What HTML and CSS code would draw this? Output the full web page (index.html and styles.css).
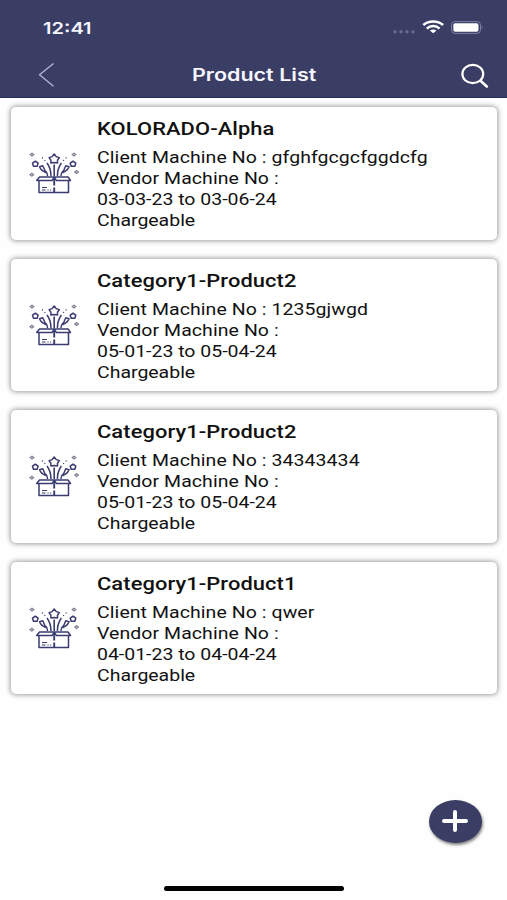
FILE: index.html
```html
<!DOCTYPE html>
<html lang="en">
<head>
    <meta charset="UTF-8">
    <meta name="viewport" content="width=device-width, initial-scale=1.0">
    <title>Product List</title>
    <link rel="stylesheet" href="styles.css">
</head>
<body>
    <svg class="symbols" width="0" height="0">
        <symbol id="box" viewBox="0 0 52 44">
            <g fill="none" stroke="#3a3b70" stroke-width="1.5" stroke-linejoin="round">
                <!-- box -->
                <path d="M11 30V41.5H40.500V30"/>
                <path d="M11.500 26H40L42.500 29.500H28.500L26.200 26.500L24 29.500H8.700Z"/>
                <path d="M26.200 26V34.500M26.200 36.500V41.500" stroke-width="1.9"/>
                <path d="M14 36.500H19M14 39H17.500M19.500 39H20.700M22 39H23.200" stroke-width="1.1"/>
                <!-- streamers -->
                <path d="M26.200 13.500V25" stroke-width="1.6"/>
                <path d="M23 25C23 20 22 16 19 12M29.400 25C29.400 20 30.400 16 33.400 12"/>
                <path d="M19.500 25C19.500 23 19 21.500 17.500 20M33 25C33 23 33.500 21.500 35 20"/>
                <path d="M11.600 15.800L14.800 14.800L17.800 21.500C15 20.500 12.500 18.500 11.600 15.800Z"/>
                <path d="M41 15.800L37.800 14.800L34.800 21.500C37.600 20.500 40.100 18.500 41 15.800Z"/>
                <path d="M14 6.500L14.800 7.300M16.500 9L17.300 9.900M38.500 6.500L37.700 7.300M36 9L35.200 9.900" stroke-width="1.1"/>
                <!-- stars -->
                <path d="M26.200 3L28.300 5.600L31.300 6.600L29.500 9.200V12L26.200 11.500L22.900 12V9.200L21.100 6.600L24.100 5.600Z"/>
                <path d="M7.300 10.200L10.100 12.200L9.100 15.300H5.500L4.500 12.200Z"/>
                <path d="M45 10.200L47.800 12.200L46.800 15.300H43.200L42.200 12.200Z"/>
            </g>
            <g fill="none" stroke="#7b7d90" stroke-width="1.2">
                <path d="M4 2.200L5.800 3.600L4 5L2.200 3.600Z"/>
                <path d="M46 2.200L47.800 3.600L46 5L44.200 3.600Z"/>
                <path d="M3.800 22.300L5.600 23.700L3.800 25.100L2 23.700Z"/>
                <path d="M48.600 19.700L50.400 21.100L48.600 22.500L46.800 21.100Z"/>
            </g>
        </symbol>
    </svg>

    <header class="header">
        <div class="status-bar">
            <span class="time"><span class="wide">12:41</span></span>
            <svg class="status-icons" width="92" height="16" viewBox="0 0 92 16">
                <g fill="#686b92">
                    <circle cx="4" cy="11.7" r="1.7"/>
                    <circle cx="10" cy="11.7" r="1.7"/>
                    <circle cx="16" cy="11.7" r="1.7"/>
                    <circle cx="22" cy="11.7" r="1.7"/>
                </g>
                <g fill="none" stroke="#fff" stroke-width="2.5">
                    <path d="M32.3 5C37.7 0.3 46.7 0.3 52.1 5"/>
                    <path d="M35.8 8.6C39.5 5.2 44.9 5.2 48.6 8.6"/>
                </g>
                <path fill="#fff" d="M38.9 10.6Q42.2 8.2 45.5 10.6L42.2 13.2Z"/>
                <rect x="60.5" y="1.6" width="29" height="11.8" rx="3.5" fill="none" stroke="#7d80a6"/>
                <rect x="62.3" y="3.3" width="25.2" height="8.5" rx="2" fill="#fff"/>
                <path d="M90.8 5.8Q92.4 7.5 90.8 9.2Z" fill="#8d90b2"/>
            </svg>
        </div>
        <div class="nav-bar">
            <svg class="back" width="16" height="26" viewBox="0 0 16 26">
                <path d="M15.5 1.5L1.5 12.8L15.5 24.2" fill="none" stroke="#b9bbdf" stroke-width="1.2"/>
            </svg>
            <h1 class="nav-title"><span class="wide">Product List</span></h1>
            <svg class="search" width="30" height="26" viewBox="0 0 30 26">
                <ellipse cx="12.8" cy="12" rx="10.4" ry="9.2" fill="none" stroke="#fff" stroke-width="2.2"/>
                <path d="M20.5 18.8L26.8 24.5" stroke="#fff" stroke-width="2.6" stroke-linecap="round"/>
            </svg>
        </div>
    </header>

    <main class="list">
        <div class="card">
            <svg class="card-icon"><use href="#box"/></svg>
            <div class="card-text wide">
                <h2>KOLORADO-Alpha</h2>
                <p class="machine">Client Machine No : gfghfgcgcfggdcfg</p>
                <p class="machine">Vendor Machine No :</p>
                <p>03-03-23 to 03-06-24</p>
                <p>Chargeable</p>
            </div>
        </div>
        <div class="card">
            <svg class="card-icon"><use href="#box"/></svg>
            <div class="card-text wide">
                <h2>Category1-Product2</h2>
                <p class="machine">Client Machine No : 1235gjwgd</p>
                <p class="machine">Vendor Machine No :</p>
                <p>05-01-23 to 05-04-24</p>
                <p>Chargeable</p>
            </div>
        </div>
        <div class="card">
            <svg class="card-icon"><use href="#box"/></svg>
            <div class="card-text wide">
                <h2>Category1-Product2</h2>
                <p class="machine">Client Machine No : 34343434</p>
                <p class="machine">Vendor Machine No :</p>
                <p>05-01-23 to 05-04-24</p>
                <p>Chargeable</p>
            </div>
        </div>
        <div class="card">
            <svg class="card-icon"><use href="#box"/></svg>
            <div class="card-text wide">
                <h2>Category1-Product1</h2>
                <p class="machine">Client Machine No : qwer</p>
                <p class="machine">Vendor Machine No :</p>
                <p>04-01-23 to 04-04-24</p>
                <p>Chargeable</p>
            </div>
        </div>
    </main>

    <button class="add-button" aria-label="Add product">
        <svg width="28" height="24" viewBox="0 0 28 24">
            <path d="M3 12H25M14 3V21" stroke="#fff" stroke-width="4" stroke-linecap="round"/>
        </svg>
    </button>
    <div class="home-indicator"></div>
</body>
</html>
```

FILE: styles.css
```css
* {
    box-sizing: border-box;
}
body {
    margin: 0;
    height: 900px;
    font-family: Roboto, sans-serif;
    background-color: #fefefe;
    color: #111;
    overflow: hidden;
    position: relative;
}
h1, h2, p {
    margin: 0;
}
.symbols {
    display: block;
}
/* stretched lettering */
.wide {
    display: inline-block;
    transform: scaleX(1.216);
    transform-origin: left center;
    white-space: nowrap;
}
.header {
    height: 98px;
    background-color: #3a3d64;
    border-bottom: 1px solid #2c2c5c;
    color: #fff;
}
.status-bar {
    display: flex;
    justify-content: space-between;
    height: 54px;
    padding: 20px 24px 0 43px;
}
.time {
    font-family: Inter, sans-serif;
    font-size: 16.5px;
    font-weight: 600;
    line-height: 16px;
    color: #f4f4ff;
}
.nav-bar {
    display: grid;
    grid-template-columns: 90px 1fr 110px;
    align-items: center;
    height: 42px;
    padding: 0 17px 0 38px;
}
.nav-title {
    font-family: Inter, sans-serif;
    font-size: 17px;
    font-weight: 600;
    line-height: 20px;
    text-align: center;
    color: #f6f6ff;
}
.nav-title .wide {
    transform: scaleX(1.265);
    transform-origin: center;
}
.search {
    justify-self: end;
}
.list {
    display: flex;
    flex-direction: column;
    gap: 19px;
    padding: 9px 10px 0 11px;
}
.card {
    display: flex;
    height: 132.6px;
    padding: 10px 17px;
    background-color: #fff;
    border-radius: 5px;
    box-shadow: 0 0 5px 1px rgba(0, 0, 0, 0.38);
}
.card-icon {
    width: 52px;
    height: 44px;
    margin-top: 34px;
    flex-shrink: 0;
}
.card-text {
    margin-left: 17px;
}
.card-text h2 {
    font-size: 18px;
    font-weight: 500;
    line-height: 24px;
    margin-bottom: 6px;
    letter-spacing: 0.07px;
}
.card-text p {
    font-size: 16px;
    line-height: 21px;
}
.card-text .machine {
    letter-spacing: 0.07px;
}
.add-button {
    position: absolute;
    left: 428.5px;
    top: 799.5px;
    display: flex;
    align-items: center;
    justify-content: center;
    width: 53px;
    height: 43px;
    padding: 0;
    border: none;
    border-radius: 50%;
    background-color: #3a3d64;
    box-shadow: 1px 2px 3px rgba(0, 0, 0, 0.5);
}
.home-indicator {
    position: absolute;
    left: 164px;
    top: 886px;
    width: 180px;
    height: 5px;
    border-radius: 3px;
    background-color: #000;
}
```
